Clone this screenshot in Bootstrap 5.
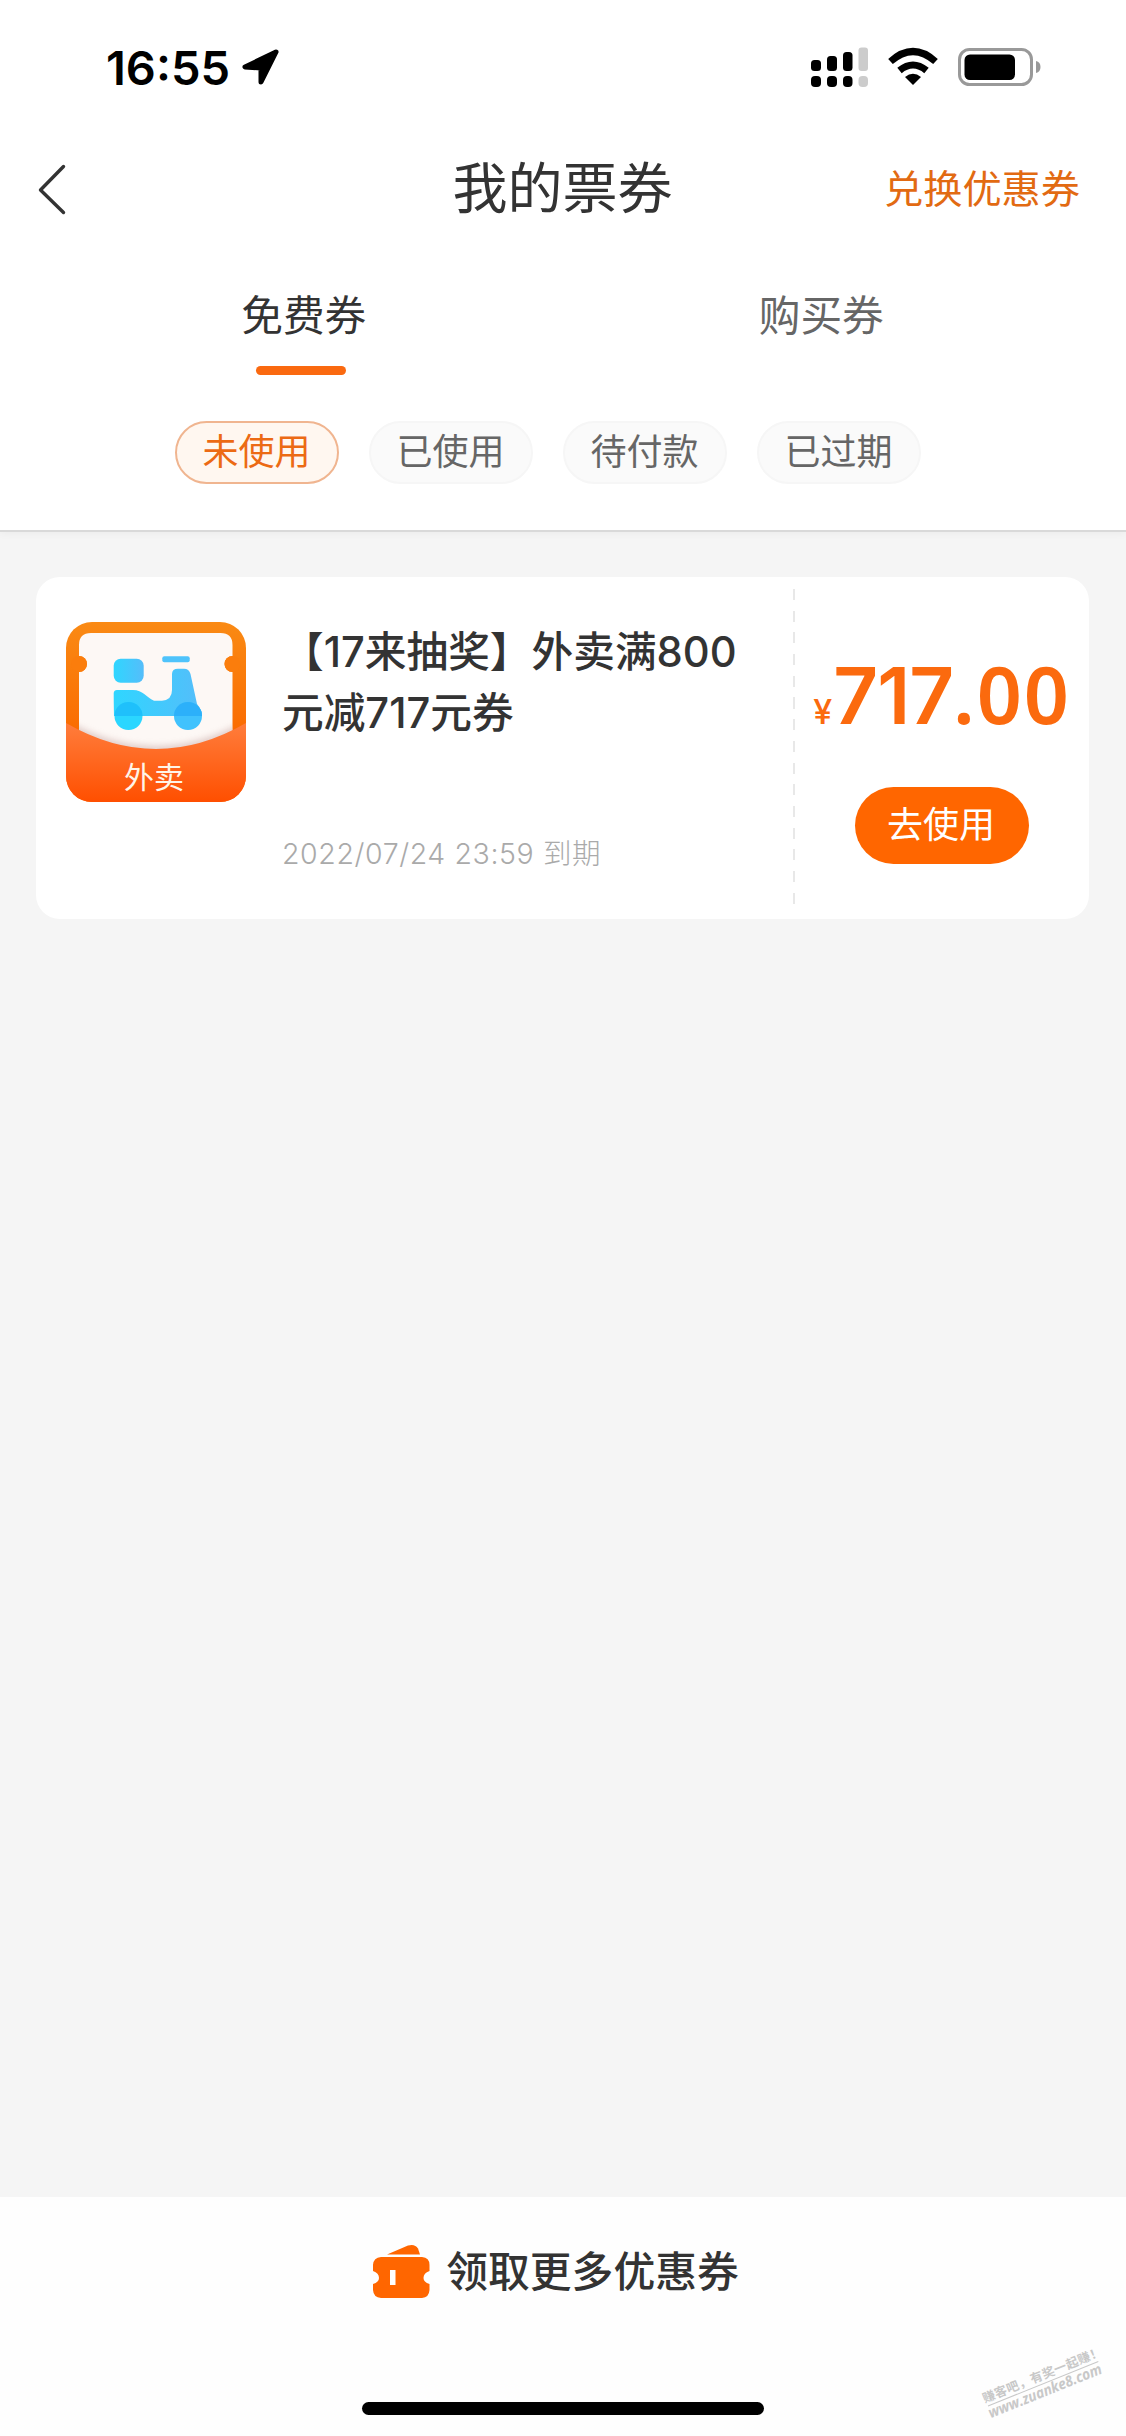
<!DOCTYPE html>
<html lang="zh-CN">
<head>
<meta charset="utf-8">
<meta name="viewport" content="width=device-width, initial-scale=1">
<title>我的票券</title>
<link rel="stylesheet" href="https://cdn.jsdelivr.net/npm/bootstrap@5.3.0/dist/css/bootstrap.min.css">
<style>
  body { font-family: Inter, "Noto Sans CJK SC", sans-serif; color: #333; background: #f5f5f5; overflow-x: hidden; }
  svg { display: block; flex: none; }
  a { color: inherit; text-decoration: none; }
  .screen { height: 2436px; }
  .top-area { height: 532px; border-bottom: 2px solid #d9d9d9; box-shadow: 0 2px 8px rgba(0,0,0,.04); }
  .status-bar { height: 136px; padding: 0 84px 2px 106px; color: #000; }
  .clock { font-size: 47px; font-weight: 600; line-height: 1; letter-spacing: 0; }
  .arrow { margin-left: 11px; }
  .title-bar { height: 106px; padding: 0 46px 0 36px; }
  .page-title { font-size: 55px; font-weight: 400; line-height: 1; padding: 0 0 2px 9px; }
  .redeem { font-size: 39.2px; color: #e26a12; line-height: 1; padding-bottom: 1px; }
  .tab-row { height: 179px; padding: 0 46px 0 45px; }
  .tab-item { flex: 1 1 0; font-size: 41.7px; line-height: 1; color: #666; padding-top: 54px; }
  .tab-item.active { color: #333; }
  .tab-item.active::after { content: ""; width: 90px; height: 9px; border-radius: 5px; background: #fa6910; margin: 28px 6px 0 0; }
  .pill-row { gap: 30px; padding-right: 30px; }
  .pill { width: 164px; height: 63px; font-size: 36px; line-height: 1; color: #666; background: #fafafa; border: 2px solid #f6f6f6; padding: 0 1px 1px 0; }
  .pill.active { color: #ec6a14; background: #fff7f0; border-color: #f0b590; }
  .coupon { margin: 45px 37px 0 36px; height: 342px; border-radius: 24px; background: #fff; }
  .coupon-info { width: 757px; padding: 45px 20px 0 30px; gap: 36px; }
  .coupon-name { font-size: 41.7px; line-height: 61px; font-weight: 500; white-space: nowrap; letter-spacing: 0; }
  .expiry { font-size: 28.5px; line-height: 1; color: #aaa; font-weight: 300; margin-top: 96px; letter-spacing: .6px; }
  .tear { width: 2px; margin: 12px 0 11px; background: repeating-linear-gradient(#e8e8e8 0 11px, transparent 11px 21.7px); }
  .price { color: #fb6a0e; font-weight: 600; font-family: "Noto Sans", sans-serif; font-size: 79px; line-height: 80px; height: 80px; margin-top: 77px; white-space: nowrap; }
  .price .yen { font-family: Inter, sans-serif; font-size: 34px; line-height: 1; font-weight: 500; margin-right: 1px; }
  .price .whole { font-family: Inter, sans-serif; font-size: 78px; line-height: 1; letter-spacing: -1px; }
  .price .cents { letter-spacing: 1.8px; }
  .use-btn { width: 174px; height: 77px; background: #ff6600; color: #fff; font-size: 36px; line-height: 1; margin-top: 53px; padding: 0 2px 2px 0; }
  .bottom-area { height: 239px; background: #fefefe; }
  .more { font-size: 41.8px; font-weight: 500; line-height: 1; gap: 15px; padding-top: 47px; margin-right: 15px; }
  .more span { padding-top: 2px; }
  .home-bar { width: 402px; height: 13px; border-radius: 7px; background: #000; margin-bottom: 21px; }
  .stamp { right: 0; bottom: 0; }
</style>
<script src="https://cdn.jsdelivr.net/npm/bootstrap@5.3.0/dist/js/bootstrap.bundle.min.js"></script>
</head>
<body>
<div class="screen d-flex flex-column position-relative">
  <header class="top-area bg-white">
    <div class="status-bar d-flex align-items-center justify-content-between">
      <div class="d-flex align-items-center">
        <span class="clock">16:55</span>
        <svg class="arrow" width="40" height="38" viewBox="0 0 40 38"><path d="M35 4 L4 19 L20 20 L20 34 Z" stroke="#000" stroke-width="5" stroke-linejoin="round"/></svg>
      </div>
      <svg width="231" height="42" viewBox="811 45 231 42">
        <rect x="811" y="59" width="10" height="11" rx="3.500"/><rect x="827" y="55" width="10" height="15" rx="3.500"/><rect x="843" y="51" width="9.500" height="19" rx="3.500"/>
        <rect x="858.500" y="46.500" width="9.500" height="23.500" rx="3" fill="#ccc"/>
        <rect x="811" y="75" width="10" height="11" rx="4"/><rect x="827" y="75" width="10" height="11" rx="4"/><rect x="843" y="75" width="9.500" height="11" rx="4"/>
        <rect x="858.500" y="75" width="9.500" height="11" rx="4" fill="#ccc"/>
        <g fill="none" stroke="#000" stroke-width="7"><path d="M890.500 60.500 Q913 40.500 935.500 60.500"/><path d="M899.500 69.500 Q913 58.500 926.500 69.500"/></g>
        <path d="M905 76 Q913 69.500 921 76 L913 84 Z"/>
        <rect x="959.500" y="48.500" width="72" height="35" rx="10" fill="#fff" stroke="#999" stroke-width="3"/>
        <rect x="964.500" y="53.500" width="50.500" height="25.500" rx="5.500"/>
        <path d="M1036 60 Q1040.500 61 1040.500 66 Q1040.500 71 1036 72 Z" fill="#999"/>
      </svg>
    </div>
    <div class="title-bar row g-0 align-items-center">
      <a class="col-3" href="#"><svg width="32" height="54" viewBox="0 0 32 54"><path d="M27.500 4.500 L4.500 28 L27.500 50.500" fill="none" stroke="#333" stroke-width="3.400" stroke-linecap="round" stroke-linejoin="round"/></svg></a>
      <h1 class="page-title col-6 text-center m-0">我的票券</h1>
      <a class="redeem col-3 text-end" href="#">兑换优惠券</a>
    </div>
    <nav class="tab-row d-flex">
      <a class="tab-item active d-flex flex-column align-items-center" href="#">免费券</a>
      <a class="tab-item d-flex flex-column align-items-center" href="#">购买券</a>
    </nav>
    <div class="pill-row d-flex justify-content-center">
      <a class="pill active rounded-pill d-flex align-items-center justify-content-center" href="#">未使用</a>
      <a class="pill rounded-pill d-flex align-items-center justify-content-center" href="#">已使用</a>
      <a class="pill rounded-pill d-flex align-items-center justify-content-center" href="#">待付款</a>
      <a class="pill rounded-pill d-flex align-items-center justify-content-center" href="#">已过期</a>
    </div>
  </header>

  <main class="flex-grow-1">
    <article class="coupon d-flex">
      <div class="coupon-info d-flex align-items-start">
        <svg width="180" height="180" viewBox="0 0 180 180">
          <defs>
            <linearGradient id="frame" x1="0" y1="0" x2="0" y2="1"><stop offset="0" stop-color="#fa8a14"/><stop offset=".65" stop-color="#fa6a00"/></linearGradient>
            <linearGradient id="pocket" x1="0" y1="0" x2="0" y2="1"><stop offset="0" stop-color="#ff7d3c"/><stop offset="1" stop-color="#ff4f00"/></linearGradient>
            <linearGradient id="sky" x1="0" y1="0" x2="1" y2="0"><stop offset="0" stop-color="#2fd6ff"/><stop offset="1" stop-color="#55bdfa"/></linearGradient>
            <filter id="soft" x="-20%" y="-20%" width="140%" height="140%"><feGaussianBlur stdDeviation="3"/></filter>
            <clipPath id="tile"><rect width="180" height="180" rx="26"/></clipPath>
            <clipPath id="paper"><rect x="13" y="11" width="153.500" height="130"/></clipPath>
          </defs>
          <g clip-path="url(#tile)">
            <rect width="180" height="180" fill="url(#frame)"/>
            <path d="M13 140 V50 A8 8 0 0 0 13 34 V23 Q13 11 25 11 H154.500 Q166.500 11 166.500 23 V34 A8 8 0 0 0 166.500 50 V140Z" fill="#fdf8f5"/>
            <g clip-path="url(#paper)"><path d="M0 98 Q90 150 180 98 V180 H0Z" fill="#c9a9a5" opacity=".55" filter="url(#soft)"/></g>
            <circle cx="13" cy="42" r="8" fill="#fb7d0c"/><circle cx="166.500" cy="42" r="8" fill="#fb7d0c"/>
            <path d="M0 101 Q90 153 180 101 V180 H0Z" fill="url(#pocket)"/>
          </g>
          <rect x="47.700" y="36.700" width="30" height="24" rx="7" fill="url(#sky)"/>
          <rect x="96.300" y="34.300" width="27.400" height="6" rx="2" fill="#4fc3fb"/>
          <path d="M51 68 H67 C77 68 80 75 88 78.700 H96 Q106 78 106 68 V52 Q106 46.700 112 46.700 H118 Q123 46.700 124.500 52 L131 82 Q136 88 136 94 H48 Q47.700 80 47.700 71 Q48 68 51 68Z" fill="url(#sky)"/>
          <circle cx="62.500" cy="94" r="14" fill="#2ad6ff"/>
          <circle cx="122" cy="94" r="14" fill="#40c2fd"/>
          <path d="M48.500 94 A14 14 0 0 1 76.500 94Z" fill="#1fc0fb"/><path d="M108 94 A14 14 0 0 1 136 94Z" fill="#2cb0fa"/>
          <text x="88" y="165.500" text-anchor="middle" font-size="30" fill="#fff4e8" font-family="Noto Sans CJK SC, sans-serif">外卖</text>
        </svg>
        <div>
          <h2 class="coupon-name mb-0">【17来抽奖】外卖满800<br>元减717元券</h2>
          <div class="expiry">2022/07/24 23:59 到期</div>
        </div>
      </div>
      <div class="tear"></div>
      <div class="flex-grow-1 d-flex flex-column align-items-center">
        <div class="price"><span class="yen">¥</span><span class="whole">717</span><span class="cents">.00</span></div>
        <a class="use-btn rounded-pill d-flex align-items-center justify-content-center" href="#">去使用</a>
      </div>
    </article>
  </main>

  <footer class="bottom-area d-flex flex-column align-items-center justify-content-between">
    <a class="more d-flex align-items-center" href="#">
      <svg width="59" height="56" viewBox="0 0 59 56"><g fill="#ff6600"><path d="M15 10.500 L36 1.500 Q43 -.5 46 4.500 L48 10.500Z"/><path d="M9 13 H50 Q57.500 13.500 57.500 21 V27 Q51.500 29 51.500 34 Q51.500 38 57.500 40 V46 Q57 53.500 50 54 H9 Q1.500 53.500 1 46 V40 Q7 38 7 34 Q7 29 1 27 V21 Q1.500 13.500 9 13Z"/></g><rect x="18" y="26" width="5.500" height="15" fill="#fff"/></svg>
      <span>领取更多优惠券</span>
    </a>
    <div class="home-bar"></div>
  </footer>

  <svg class="stamp position-absolute" width="166" height="106" viewBox="960 2330 166 106">
    <g transform="translate(988 2406) rotate(-22)" fill="#c8c8c8" font-weight="700">
      <path d="M0 0 H119" stroke="#c8c8c8" stroke-width="1"/>
      <text x="-2" y="-4" font-size="12.500" textLength="128" font-family="Noto Sans CJK SC, sans-serif">赚客吧，有奖一起赚！</text>
      <text x="-2" y="12.500" font-size="15" font-style="italic" textLength="121" lengthAdjust="spacingAndGlyphs" font-family="Open Sans, sans-serif">www.zuanke8.com</text>
    </g>
  </svg>
</div>
</body>
</html>
